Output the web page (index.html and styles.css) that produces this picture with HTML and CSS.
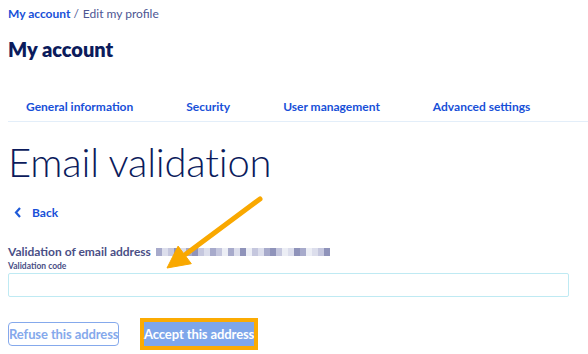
FILE: index.html
```html
<!DOCTYPE html>
<html lang="en">
<head>
<meta charset="utf-8">
<title>Email validation</title>
<link rel="stylesheet" href="styles.css">
</head>
<body>
<div class="page">
  <nav class="breadcrumb"><a class="crumb-link">My account</a><span class="sep">/</span><span class="crumb-current">Edit my profile</span></nav>
  <h1 class="account-title">My account</h1>
  <ul class="tabs">
    <li class="tab">General information</li>
    <li class="tab">Security</li>
    <li class="tab">User management</li>
    <li class="tab">Advanced settings</li>
  </ul>
  <h2 class="page-title">Email validation</h2>
  <a class="back"><svg class="chev" width="8" height="11" viewBox="0 0 8 11"><path d="M6 1 L2 5.5 L6 10" fill="none" stroke="#1f5ad8" stroke-width="2.2"/></svg><span>Back</span></a>
  <div class="email-row"><span class="email-label">Validation of email address</span>
    <span class="blur"><i class="b a"></i><i class="b c"></i><i class="b b2"></i><i class="b d"></i><i class="b c"></i><i class="b a"></i><i class="b d"></i><i class="b b2"></i><i class="b c"></i><i class="b a"></i><i class="b b2"></i><i class="b e"></i><i class="b a"></i><i class="b c"></i><i class="b d"></i><i class="b e"></i><i class="b b2"></i><i class="b c"></i><i class="b a"></i><i class="b d"></i><i class="b b2"></i><i class="b e"></i><i class="b c"></i><i class="b d"></i><i class="b a"></i><i class="b e"></i><i class="b c"></i><i class="b b2"></i><i class="b d"></i></span>
  </div>
  <label class="code-label">Validation code</label>
  <input class="code-input" type="text">
  <div class="actions">
    <button class="btn btn-outline">Refuse this address</button>
    <div class="highlight"><button class="btn btn-primary">Accept this address</button></div>
  </div>
  <svg class="arrow" width="120" height="90" viewBox="0 0 120 90">
    <line x1="108" y1="4" x2="34" y2="59" stroke="#f9a800" stroke-width="5" stroke-linecap="round"/>
    <polygon points="15,73 39.3,68.7 26.1,51.1" fill="#f9a800" stroke="#f9a800" stroke-width="1" stroke-linejoin="round"/>
  </svg>
</div>
</body>
</html>
```
FILE: styles.css
```css
* { box-sizing: border-box; }
html, body { margin: 0; padding: 0; background: #fff; }
body { font-family: "Lato", "Open Sans", sans-serif; color: #000e9c; }
.page { position: relative; width: 588px; height: 354px; padding: 0 0 0 8px; overflow: hidden; }
.breadcrumb { font-size: 12px; line-height: 16px; padding-top: 6px; height: 22px; }
.crumb-link { color: #1850d8; font-weight: 700; }
.sep { color: #4d5693; margin: 0 4px 0 3px; }
.crumb-current { color: #4d5693; }
.account-title { margin: 15px 0 0; font-size: 20px; line-height: 24px; font-weight: 800; color: #0b1b5c; }
.tabs { list-style: none; margin: 38px 0 0; padding: 0 0 6px 18px; display: flex; gap: 53px; border-bottom: 1px solid #e3eef9; height: 23px; }
.tab { flex-shrink: 0; white-space: nowrap; font-size: 12px; line-height: 16px; font-weight: 700; color: #1850d8; }
.page-title { margin: 16px 0 0; font-size: 40px; line-height: 48px; font-weight: 300; color: #0b1b5c; letter-spacing: -0.2px; }
.back { display: flex; align-items: center; margin: 18px 0 0 6px; height: 16px; color: #1850d8; font-weight: 700; font-size: 12px; }
.chev { margin-right: 10px; }
.email-row { display: flex; align-items: center; margin-top: 23px; height: 16px; }
.email-label { font-size: 12px; font-weight: 700; color: #4a4f86; }
.blur { display: flex; margin-left: 5px; height: 8px; margin-top: 1px; }
.b { display: block; width: 6px; height: 8px; }
.a { background: #a7aacb; }
.b2 { background: #c5c7de; }
.c { background: #dcdeec; }
.d { background: #8f93ba; }
.e { background: #eceef5; }
.code-label { display: block; font-size: 8.5px; font-weight: 700; color: #4a4f86; margin-top: 2px; line-height: 10px; }
.code-input { display: block; width: 561px; height: 24px; margin-top: 2px; border: 1px solid #bfeaf3; border-radius: 2px; background: #fff; }
.actions { display: flex; align-items: center; margin-top: 21px; gap: 21px; }
.btn { font-family: inherit; font-size: 13px; font-weight: 700; height: 24px; padding: 0; border-radius: 4px; white-space: nowrap; letter-spacing: -0.1px; }
.btn-outline { width: 111px; background: #fff; border: 1px solid #85a9ec; color: #85a9ec; }
.highlight { border: 4px solid #fbab03; background: #fbab03; }
.btn-primary { display: block; width: 110px; background: #7ea6ea; border: 0; border-radius: 0; color: #fff; }
.arrow { position: absolute; left: 152px; top: 195px; }
```
